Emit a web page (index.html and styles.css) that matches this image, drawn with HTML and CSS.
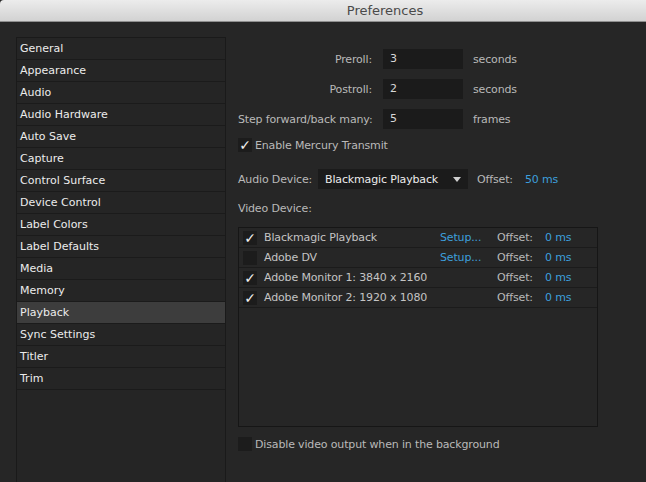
FILE: index.html
```html
<!DOCTYPE html>
<html>
<head>
<meta charset="utf-8">
<link rel="stylesheet" href="styles.css">
</head>
<body>
<div class="titlebar"><span class="title">Preferences</span></div>
<div class="main">
  <ul class="cats">
    <li>General</li>
    <li>Appearance</li>
    <li>Audio</li>
    <li>Audio Hardware</li>
    <li>Auto Save</li>
    <li>Capture</li>
    <li>Control Surface</li>
    <li>Device Control</li>
    <li>Label Colors</li>
    <li>Label Defaults</li>
    <li>Media</li>
    <li>Memory</li>
    <li class="sel">Playback</li>
    <li>Sync Settings</li>
    <li>Titler</li>
    <li>Trim</li>
  </ul>
  <div class="pane">
    <div class="fields">
      <label class="lbl">Preroll:</label><div class="input">3</div><span class="unit">seconds</span>
      <label class="lbl">Postroll:</label><div class="input">2</div><span class="unit">seconds</span>
      <label class="lbl">Step forward/back many:</label><div class="input">5</div><span class="unit">frames</span>
    </div>
    <div class="check-row mercury"><span class="cb on">✓</span><span>Enable Mercury Transmit</span></div>
    <div class="audio-row">
      <span class="lbl audio-lbl">Audio Device:</span>
      <div class="select"><span>Blackmagic Playback</span><span class="arrow"></span></div>
      <span class="lbl off">Offset:</span>
      <span class="blue">50 ms</span>
    </div>
    <div class="lbl video-lbl">Video Device:</div>
    <div class="devices">
      <div class="dev"><span class="cb on">✓</span><span class="name">Blackmagic Playback</span><span class="setup">Setup...</span><span class="lbl off2">Offset:</span><span class="blue">0 ms</span></div>
      <div class="dev"><span class="cb"></span><span class="name">Adobe DV</span><span class="setup">Setup...</span><span class="lbl off2">Offset:</span><span class="blue">0 ms</span></div>
      <div class="dev"><span class="cb on">✓</span><span class="name">Adobe Monitor 1: 3840 x 2160</span><span class="setup"></span><span class="lbl off2">Offset:</span><span class="blue">0 ms</span></div>
      <div class="dev"><span class="cb on">✓</span><span class="name">Adobe Monitor 2: 1920 x 1080</span><span class="setup"></span><span class="lbl off2">Offset:</span><span class="blue">0 ms</span></div>
    </div>
    <div class="check-row bg"><span class="cb"></span><span>Disable video output when in the background</span></div>
  </div>
</div>
</body>
</html>
```
FILE: styles.css
```css
* { box-sizing: border-box; }
html, body { margin: 0; padding: 0; }
body {
  width: 646px;
  height: 482px;
  overflow: hidden;
  background: #262626;
  font-family: "DejaVu Sans", sans-serif;
  font-size: 11px;
  letter-spacing: -0.15px;
  color: #b9b9b9;
  white-space: nowrap;
}
.titlebar {
  height: 22px;
  background: linear-gradient(#ececec, #d2d2d2);
  border-bottom: 1px solid #8f8f8f;
  border-top-left-radius: 4px;
  display: flex;
  justify-content: center;
  align-items: center;
  padding-left: 124px;
}
.title {
  font-size: 13px;
  letter-spacing: 0;
  color: #4a4a4a;
}
.main {
  display: flex;
  padding-top: 15px;
  padding-left: 16px;
}
.cats {
  list-style: none;
  margin: 0;
  padding: 0;
  width: 210px;
  height: 460px;
  border: 1px solid #1a1a1a;
  background: #252525;
  flex: none;
}
.cats li {
  height: 22px;
  line-height: 21px;
  padding-left: 3px;
  border-bottom: 1px solid #1b1b1b;
  color: #ececec;
  letter-spacing: 0;
}
.cats li.sel { background: #3d3d3d; }
.pane {
  margin-left: 12px;
  padding-top: 12px;
  width: 362px;
}
.fields {
  display: grid;
  grid-template-columns: 134px 80px auto;
  column-gap: 11px;
  row-gap: 10px;
  align-items: center;
}
.fields .lbl { text-align: right; }
.fields .unit { margin-left: -1px; }
.input {
  height: 20px;
  line-height: 20px;
  background: #1b1b1b;
  color: #d8d8d8;
  padding-left: 7px;
}
.lbl { color: #b9b9b9; }
.check-row {
  display: flex;
  align-items: center;
  gap: 3px;
  color: #b9b9b9;
}
.mercury { margin-top: 9px; }
.cb {
  width: 14px;
  height: 14px;
  background: #1c1c1c;
  color: #f0f0f0;
  font-size: 14px;
  line-height: 14px;
  text-align: center;
  flex: none;
  overflow: hidden;
}
.audio-row {
  display: flex;
  align-items: center;
  margin-top: 17px;
}
.audio-lbl { width: 80px; }
.select {
  width: 150px;
  height: 20px;
  background: #1b1b1b;
  display: flex;
  align-items: center;
  justify-content: space-between;
  padding: 0 7px 0 7px;
  color: #ececec;
}
.arrow {
  width: 0;
  height: 0;
  border-left: 4px solid transparent;
  border-right: 4px solid transparent;
  border-top: 5px solid #d0d0d0;
}
.off { margin-left: 9px; width: 48px; }
.blue { color: #3d9fdc; }
.video-lbl { margin-top: 13px; }
.devices {
  margin-top: 12px;
  height: 200px;
  width: 360px;
  border: 1px solid #161616;
}
.dev {
  height: 20px;
  border-bottom: 1px solid #1b1b1b;
  display: flex;
  align-items: center;
  padding-left: 4px;
}
.dev .name {
  margin-left: 7px;
  width: 176px;
  color: #c4c4c4;
}
.dev .setup {
  width: 57px;
  color: #3d9fdc;
}
.off2 { width: 48px; }
.bg { margin-top: 10px; }
```
